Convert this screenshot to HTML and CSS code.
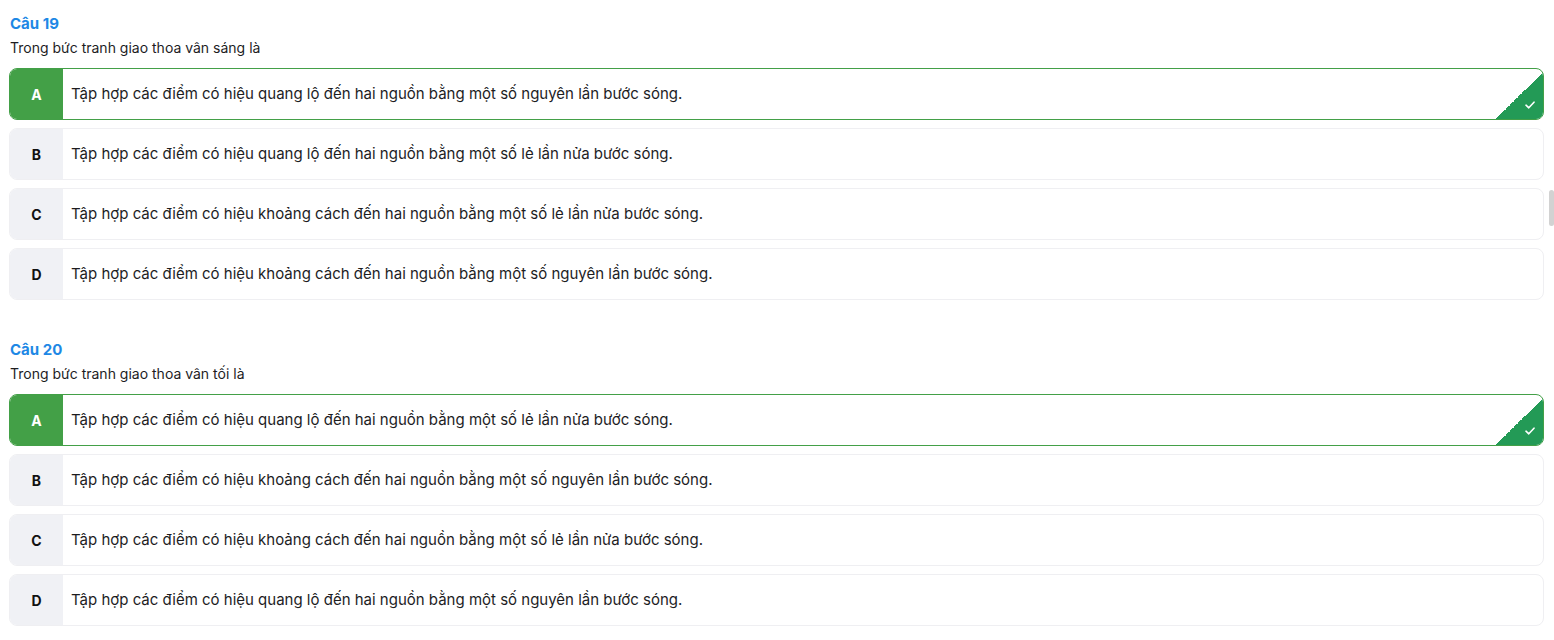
FILE: index.html
```html
<!DOCTYPE html>
<html lang="vi">
<head>
<meta charset="utf-8">
<link rel="stylesheet" href="styles.css">
</head>
<body>
<div class="page">
  <section class="question">
    <div class="q-title">Câu 19</div>
    <div class="q-text">Trong bức tranh giao thoa vân sáng là</div>
    <div class="options">
      <div class="option correct">
        <div class="letter">A</div>
        <div class="answer">Tập hợp các điểm có hiệu quang lộ đến hai nguồn bằng một số nguyên lần bước sóng.</div>
        <div class="mark"><svg viewBox="0 0 10 8" width="10" height="8"><path d="M1 4.2 L3.8 6.8 L9 1.2" fill="none" stroke="#fff" stroke-width="1.6" stroke-linecap="round" stroke-linejoin="round"/></svg></div>
      </div>
      <div class="option">
        <div class="letter">B</div>
        <div class="answer">Tập hợp các điểm có hiệu quang lộ đến hai nguồn bằng một số lẻ lần nửa bước sóng.</div>
      </div>
      <div class="option">
        <div class="letter">C</div>
        <div class="answer">Tập hợp các điểm có hiệu khoảng cách đến hai nguồn bằng một số lẻ lần nửa bước sóng.</div>
      </div>
      <div class="option">
        <div class="letter">D</div>
        <div class="answer">Tập hợp các điểm có hiệu khoảng cách đến hai nguồn bằng một số nguyên lần bước sóng.</div>
      </div>
    </div>
  </section>
  <section class="question">
    <div class="q-title">Câu 20</div>
    <div class="q-text">Trong bức tranh giao thoa vân tối là</div>
    <div class="options">
      <div class="option correct">
        <div class="letter">A</div>
        <div class="answer">Tập hợp các điểm có hiệu quang lộ đến hai nguồn bằng một số lẻ lần nửa bước sóng.</div>
        <div class="mark"><svg viewBox="0 0 10 8" width="10" height="8"><path d="M1 4.2 L3.8 6.8 L9 1.2" fill="none" stroke="#fff" stroke-width="1.6" stroke-linecap="round" stroke-linejoin="round"/></svg></div>
      </div>
      <div class="option">
        <div class="letter">B</div>
        <div class="answer">Tập hợp các điểm có hiệu khoảng cách đến hai nguồn bằng một số nguyên lần bước sóng.</div>
      </div>
      <div class="option">
        <div class="letter">C</div>
        <div class="answer">Tập hợp các điểm có hiệu khoảng cách đến hai nguồn bằng một số lẻ lần nửa bước sóng.</div>
      </div>
      <div class="option">
        <div class="letter">D</div>
        <div class="answer">Tập hợp các điểm có hiệu quang lộ đến hai nguồn bằng một số nguyên lần bước sóng.</div>
      </div>
    </div>
  </section>
</div>
<div class="scroll-thumb"></div>
</body>
</html>
```

FILE: styles.css
```css
* { box-sizing: border-box; }
html, body { margin: 0; padding: 0; background: #fff; }
body {
  font-family: Inter, "Noto Sans", "Liberation Sans", sans-serif;
  font-size: 14px;
  color: #1d1d1f;
  overflow: hidden;
}
.page {
  padding: 12px 10px 0 9px;
  display: flex;
  flex-direction: column;
  gap: 38px;
}
.q-title {
  color: #1e88e5;
  font-weight: 700;
  font-size: 15px;
  line-height: 24px;
  padding-left: 1px;
}
.q-text {
  line-height: 24px;
  color: #1d1d1f;
  padding-left: 1px;
}
.options {
  margin-top: 8px;
  display: flex;
  flex-direction: column;
  gap: 8px;
}
.option {
  position: relative;
  display: flex;
  align-items: stretch;
  height: 52px;
  border: 1px solid #efeff2;
  border-radius: 8px;
  overflow: hidden;
  background: #fff;
}
.letter {
  width: 53px;
  flex: none;
  display: flex;
  align-items: center;
  justify-content: center;
  font-weight: 700;
  background: #f0f1f5;
  color: #111;
}
.answer {
  display: flex;
  align-items: center;
  padding-left: 8px;
  font-size: 15px;
  padding-bottom: 1px;
}
.option.correct {
  border-color: #43a047;
}
.option.correct .letter {
  background: #43a047;
  color: #fff;
}
.mark {
  position: absolute;
  right: 0;
  bottom: 0;
  width: 47px;
  height: 47px;
  background: linear-gradient(to bottom right, transparent 50%, #239a56 50%);
}
.mark svg {
  position: absolute;
  right: 8px;
  bottom: 10px;
}
.scroll-thumb {
  position: fixed;
  right: 0;
  top: 190px;
  width: 5px;
  height: 36px;
  border-radius: 3px;
  background: #d2d2d2;
}
```
